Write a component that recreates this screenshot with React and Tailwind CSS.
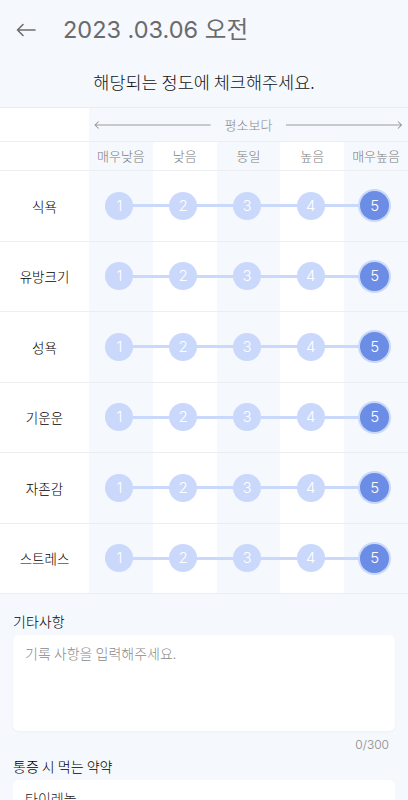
import React, { useState } from "react";

const rows = ["식욕", "유방크기", "성욕", "기운운", "자존감", "스트레스"];
const labels = ["매우낮음", "낮음", "동일", "높음", "매우높음"];
const stripe = ["bg-[#f5f8fc]", "bg-white", "bg-[#f5f8fc]", "bg-white", "bg-[#f5f8fc]"];
const latin = { fontFamily: 'Inter, "Noto Sans CJK KR", sans-serif' };

const Scale = ({ value, onPick }) => (
  <div className="relative flex-1 grid grid-cols-5 h-full">
    {stripe.map((s, i) => (
      <div key={i} className={`${s} h-full`} />
    ))}
    <div className="absolute left-[31px] right-[31px] top-1/2 h-[3px] -mt-[1.5px] bg-[#c9d8fb]" />
    <div className="absolute inset-0 grid grid-cols-5">
      {[1, 2, 3, 4, 5].map((n) => (
        <div key={n} className="flex items-center justify-center pr-[3px]">
          <button
            onClick={() => onPick(n)}
            style={latin}
            className={
              n === value
                ? "relative w-[29px] h-[29px] rounded-full bg-[#6b8de6] ring-2 ring-[#c9d8fb] text-white text-[15px] font-light flex items-center justify-center"
                : "relative w-[28px] h-[28px] rounded-full bg-[#c9d8fb] text-white text-[15px] font-light flex items-center justify-center"
            }
          >
            {n}
          </button>
        </div>
      ))}
    </div>
  </div>
);

const App = () => {
  const [values, setValues] = useState([5, 5, 5, 5, 5, 5]);
  const [memo, setMemo] = useState("");

  return (
    <div
      className="min-h-[800px] w-[408px] bg-[#f5f8fc] overflow-hidden font-light"
      style={{ fontFamily: '"Noto Sans CJK KR", "Noto Sans", sans-serif' }}
    >
      {/* header */}
      <div className="h-[60px] flex items-center pl-[16px]">
        <svg width="20" height="14" viewBox="0 0 20 14" fill="none" stroke="#6d6d6d" strokeWidth="1.6" strokeLinecap="round" strokeLinejoin="round">
          <path d="M19 7H1.5M7 1.5L1.5 7L7 12.5" />
        </svg>
        <div className="ml-[27px] text-[23.5px] text-[#6b6b6b] font-normal" style={latin}>2023 .03.06 오전</div>
      </div>
      <div className="h-[47px] flex items-center justify-center text-[17.5px] text-[#111] pb-[3px]">
        해당되는 정도에 체크해주세요.
      </div>

      {/* table */}
      <div className="border-t border-[#e9ecef]">
        <div className="flex h-[34px] border-b border-[#eceef1]">
          <div className="w-[89px] bg-white" />
          <div className="flex-1 flex items-center text-[#8a8a8a] text-[13px] px-[5px]">
            <svg className="flex-1" height="10" viewBox="0 0 112 10" preserveAspectRatio="none" fill="none" stroke="#9a9a9a" strokeWidth="1">
              <path d="M1 5H112M4.5 1.5L1 5L4.5 8.5" />
            </svg>
            <span className="px-[14px]">평소보다</span>
            <svg className="flex-1" height="10" viewBox="0 0 112 10" preserveAspectRatio="none" fill="none" stroke="#9a9a9a" strokeWidth="1">
              <path d="M0 5H111M107.5 1.5L111 5L107.5 8.5" />
            </svg>
          </div>
        </div>
        <div className="flex h-[29px] border-b border-[#eceef1]">
          <div className="w-[89px] bg-white" />
          <div className="flex-1 grid grid-cols-5">
            {labels.map((l, i) => (
              <div key={l} className={`${stripe[i]} flex items-center justify-center text-[13px] text-[#7a7a7a]`}>
                {l}
              </div>
            ))}
          </div>
        </div>
        {rows.map((r, i) => (
          <div key={r} className="flex h-[70.5px] border-b border-[#eceef1]">
            <div className="w-[89px] bg-white flex items-center justify-center text-[13.5px] text-black">{r}</div>
            <Scale
              value={values[i]}
              onPick={(n) => setValues(values.map((v, j) => (j === i ? n : v)))}
            />
          </div>
        ))}
      </div>

      {/* memo */}
      <div className="px-[13px] pt-[17px]">
        <div className="text-[14px] text-black mb-[3px]">기타사항</div>
        <textarea
          value={memo}
          onChange={(e) => setMemo(e.target.value)}
          placeholder="기록 사항을 입력해주세요."
          className="w-full h-[96px] bg-white rounded-[6px] shadow-[0_1px_3px_rgba(0,0,0,0.04)] px-[12px] py-[8px] text-[14px] text-[#222] placeholder:text-[#8a8a8a] resize-none outline-none block"
        />
        <div className="text-right text-[12px] text-[#8a8a8a] pr-[6px] mt-[5px]" style={latin}>{memo.length}/300</div>
        <div className="text-[14px] text-black mt-[2px] mb-[3px]">통증 시 먹는 약약</div>
        <div className="bg-white rounded-[6px] h-[60px] px-[12px] pt-[8px] text-[14px] text-[#222]">타이레놀</div>
      </div>
    </div>
  );
};

export default App;
